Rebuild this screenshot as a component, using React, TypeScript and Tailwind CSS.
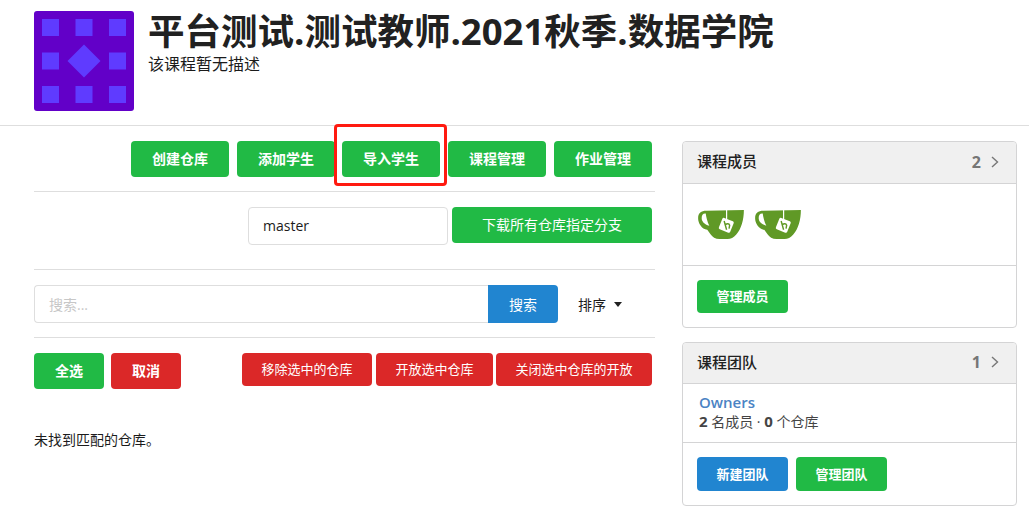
const FONT = 'font-["Open_Sans","Noto_Sans_CJK_SC",sans-serif]'

function CourseAvatar() {
  const cells = [8, 41.5, 75]
  return (
    <svg width="100" height="100" viewBox="0 0 100 100" className="shrink-0">
      <rect width="100" height="100" rx="3" fill="#6200c8" />
      {cells.map((y) =>
        cells.map((x) =>
          x === 41.5 && y === 41.5 ? null : <rect key={`${x}-${y}`} x={x} y={y} width="17" height="17" fill="#5f3bff" />,
        ),
      )}
      <polygon points="50,33.5 66.5,50 50,66.5 33.5,50" fill="#5f3bff" />
    </svg>
  )
}

function TeaCup() {
  return (
    <svg width="46" height="30" viewBox="0 0 45 29.5" className="shrink-0">
      <path
        d="M8 1.8 L45 1 C45 10 42.5 20 37.5 25 C35 28 32 29.5 29 29.5 L21 29.5 C17 29.5 14 27.5 12 24.5 L9 20.5 C3.5 19.5 0 14 0 9 C0 4 3 1.8 8 1.8 Z"
        fill="#609926"
      />
      <path d="M7 4.5 C4.5 4.5 3.5 6.5 3.5 9 C3.5 12 6 15 11 16.5 C9 12.5 8 8.5 7.5 4.5 Z" fill="#fff" />
      <path d="M28 1 L28 11" stroke="#fff" strokeWidth="1.2" fill="none" />
      <rect x="21.7" y="10" width="12" height="12" rx="1.5" fill="#fff" transform="rotate(22 27.7 16)" />
      <path d="M25.6 11.8 L28 20.4 M26.8 15.6 C28.4 14 30.4 14.2 31 16 L30.4 19.4" stroke="#609926" strokeWidth="1.4" fill="none" />
    </svg>
  )
}

function Chevron() {
  return (
    <svg width="10" height="14" viewBox="0 0 10 14" className="ml-[9px]">
      <path d="M2 2 L7.5 7 L2 12" stroke="#777" strokeWidth="1.4" fill="none" />
    </svg>
  )
}

function Btn({ color, bold, className, children }: { color: string; bold?: boolean; className: string; children: React.ReactNode }) {
  const bg = color === 'green' ? 'bg-[#21ba45]' : color === 'red' ? 'bg-[#db2828]' : 'bg-[#2185d0]'
  return (
    <button className={`${bg} ${bold ? 'font-bold' : 'font-normal'} ${className} rounded-[4px] leading-none text-white flex items-center justify-center`}>
      {children}
    </button>
  )
}

function CardHeader({ title, count, height }: { title: string; count: string; height: string }) {
  return (
    <div className={`${height} bg-[#f0f0f0] border-b border-[#d4d4d5] rounded-t-[4px] flex items-center justify-between pl-[14px] pr-[16px] pb-[2px]`}>
      <span className="text-[15px] font-medium text-[#212121]">{title}</span>
      <span className="flex items-center text-[16px] font-bold text-[#767676]">
        {count}
        <Chevron />
      </span>
    </div>
  )
}

export default function App() {
  return (
    <div className={`${FONT} w-[1029px] h-[514px] overflow-hidden bg-white text-[14px] text-[#1b1b1b]`}>
      <header className="flex pl-[34px] pt-[11px] h-[126px] border-b border-[#dedede]">
        <CourseAvatar />
        <div className="ml-[14px]">
          <h1 className="text-[36.5px] leading-[40px] mb-[2px] font-bold text-[#212121] whitespace-nowrap">平台测试.测试教师.2021秋季.数据学院</h1>
          <p className="text-[16px] leading-[22px]">该课程暂无描述</p>
        </div>
      </header>

      <main className="flex pl-[34px]">
        <section className="w-[621px]">
          <div className="flex justify-end pr-[3px] pt-[15px] pb-[14px] border-b border-[#dedede] text-[14px]">
            <Btn color="green" bold className="w-[98px] h-[36px] mr-[8px]">创建仓库</Btn>
            <Btn color="green" bold className="w-[98px] h-[36px] mr-[7px]">添加学生</Btn>
            <div className="relative mr-[8px]">
              <Btn color="green" bold className="w-[98px] h-[36px]">导入学生</Btn>
              <div className="absolute -left-[8px] -right-[7px] -top-[17px] -bottom-[9px] border-[3px] border-[#ff1a10] rounded-[4px]" />
            </div>
            <Btn color="green" bold className="w-[98px] h-[36px] mr-[8px]">课程管理</Btn>
            <Btn color="green" bold className="w-[98px] h-[36px]">作业管理</Btn>
          </div>

          <div className="flex justify-end gap-1 pr-[3px] pt-[15px] pb-[24px] border-b border-[#dedede]">
            <div className="w-[200px] h-[38px] border border-[#dedede] rounded-[4px] pl-[14px] pb-[2px] flex items-center">master</div>
            <Btn color="green" className="w-[200px] h-[36px] text-[14px]">下载所有仓库指定分支</Btn>
          </div>

          <div className="flex items-center pt-[15px] pb-[14px] border-b border-[#dedede]">
            <div className="w-[454px] h-[38px] border border-r-0 border-[#dedede] rounded-l-[4px] pl-[14px] flex items-center text-[#c7c7c7]">搜索...</div>
            <button className="w-[70px] h-[38px] bg-[#2185d0] text-white rounded-r-[4px] text-[14px]">搜索</button>
            <span className="ml-[20px]">排序</span>
            <span className="ml-[8px] w-0 h-0 border-x-[4.5px] border-x-transparent border-t-[5px] border-t-[#212121]" />
          </div>

          <div className="flex justify-between pr-[3px] pt-[15px]">
            <div className="flex gap-[7px] text-[14px]">
              <Btn color="green" bold className="w-[70px] h-[36px]">全选</Btn>
              <Btn color="red" bold className="w-[70px] h-[36px]">取消</Btn>
            </div>
            <div className="flex text-[13px]">
              <Btn color="red" className="w-[130px] h-[33px] mr-[4px]">移除选中的仓库</Btn>
              <Btn color="red" className="w-[117px] h-[33px] mr-[3px]">开放选中仓库</Btn>
              <Btn color="red" className="w-[156px] h-[33px]">关闭选中仓库的开放</Btn>
            </div>
          </div>

          <p className="mt-[41px] text-[14px] leading-5">未找到匹配的仓库。</p>
        </section>

        <aside className="w-[335px] ml-[27px] pt-[15px]">
          <div className="border border-[#d4d4d5] rounded-[4px]">
            <CardHeader title="课程成员" count="2" height="h-[42px]" />
            <div className="h-[82px] border-b border-[#d4d4d5] pl-[15px] pt-[25px] flex gap-[11px] items-start">
              <TeaCup />
              <TeaCup />
            </div>
            <div className="h-[61px] pl-[14px] pt-[14px] text-[13px]">
              <Btn color="green" bold className="w-[91px] h-[33px]">管理成员</Btn>
            </div>
          </div>

          <div className="mt-[14px] border border-[#d4d4d5] rounded-[4px]">
            <CardHeader title="课程团队" count="1" height="h-[41px]" />
            <div className="h-[59px] border-b border-[#d4d4d5] pl-[16px] pt-[9px]">
              <div className="text-[15px] leading-[18px] font-semibold text-[#4b83c4]">Owners</div>
              <div className="text-[14px] leading-[20px] text-[#444]">
                <b className="text-[15px]">2</b> 名成员 · <b className="text-[15px]">0</b> 个仓库
              </div>
            </div>
            <div className="h-[62px] pl-[14px] pt-[14px] flex gap-2 text-[13px]">
              <Btn color="blue" bold className="w-[91px] h-[34px]">新建团队</Btn>
              <Btn color="green" bold className="w-[91px] h-[34px]">管理团队</Btn>
            </div>
          </div>
        </aside>
      </main>
    </div>
  )
}
